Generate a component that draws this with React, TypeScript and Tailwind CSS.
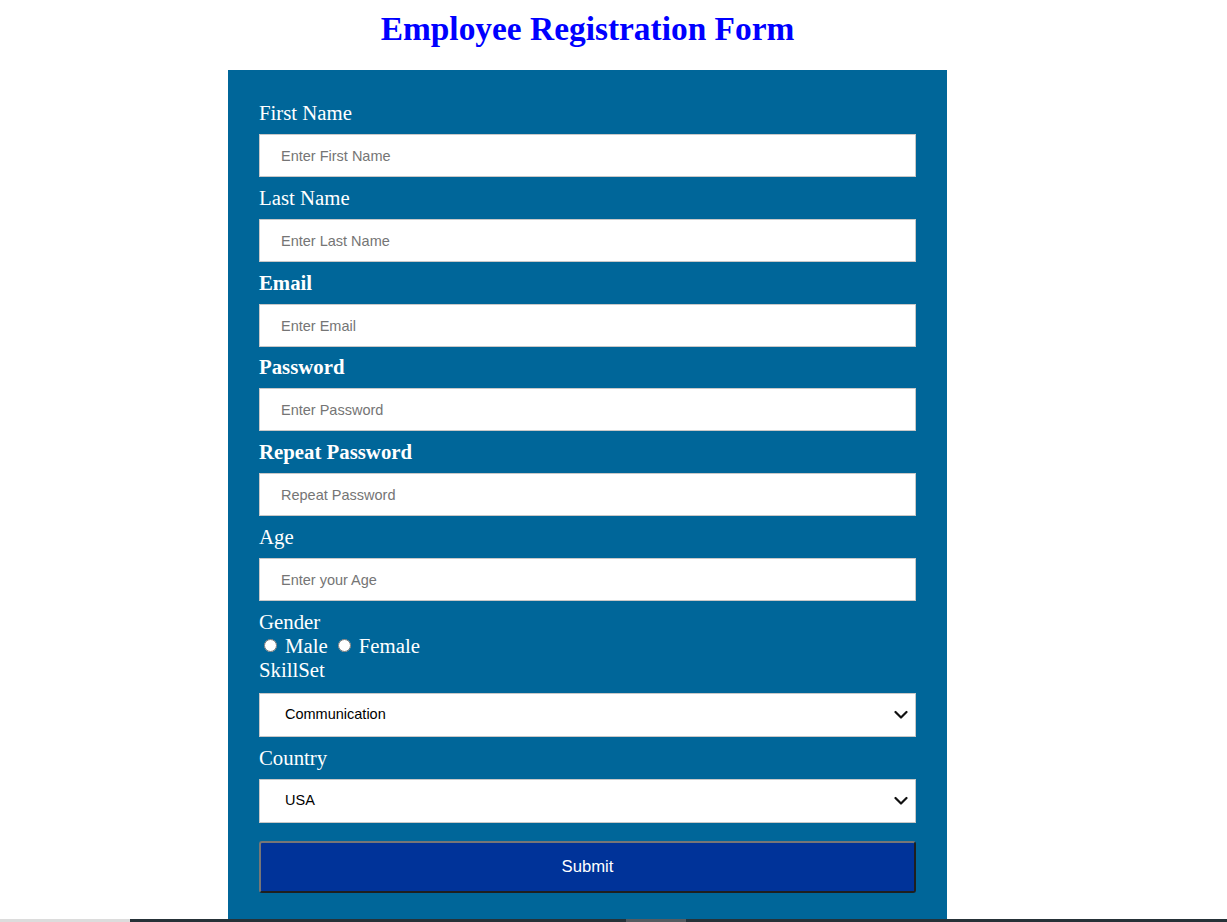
import React, { useState } from "react";

interface Field {
  name: string;
  label: string;
  placeholder: string;
  type: string;
  bold?: boolean;
  gap?: string;
}

const fields: Field[] = [
  { name: "firstName", label: "First Name", placeholder: "Enter First Name", type: "text" },
  { name: "lastName", label: "Last Name", placeholder: "Enter Last Name", type: "text" },
  { name: "email", label: "Email", placeholder: "Enter Email", type: "email", bold: true, gap: "mb-[8px]" },
  { name: "password", label: "Password", placeholder: "Enter Password", type: "password", bold: true },
  { name: "repeat", label: "Repeat Password", placeholder: "Repeat Password", type: "password", bold: true },
  { name: "age", label: "Age", placeholder: "Enter your Age", type: "text" },
];

const Chevron = () => (
  <svg
    className="pointer-events-none absolute right-[8px] top-1/2 -translate-y-1/2"
    width="14"
    height="9"
    viewBox="0 0 14 9"
    fill="none"
  >
    <path d="M1.5 1.5 L7 7 L12.5 1.5" stroke="#111" strokeWidth="2.2" strokeLinecap="round" strokeLinejoin="round" />
  </svg>
);

const App = () => {
  const [gender, setGender] = useState("");
  const [skill, setSkill] = useState("Communication");
  const [country, setCountry] = useState("USA");

  return (
    <div className="min-h-[922px] bg-white">
      <div className="w-[1175px] flex flex-col items-center">
        <h1 className="pt-[10px] mb-[23px] text-[33.4px] leading-[37px] font-bold text-[#0000ff] font-['Liberation_Serif',serif]">
          Employee Registration Form
        </h1>

        <form
          onSubmit={(e) => e.preventDefault()}
          className="w-[719px] bg-[#006699] pt-[31px] pb-[26px] px-[31px] flex flex-col font-['Liberation_Serif',serif] text-white"
        >
          {fields.map((f) => (
            <div key={f.name} className={`flex flex-col ${f.gap ?? "mb-[9px]"}`}>
              <label className={`text-[20.8px] leading-[23px] ${f.bold ? "font-bold" : ""}`}>{f.label}</label>
              <input
                type={f.type}
                name={f.name}
                placeholder={f.placeholder}
                className="mt-[10px] h-[43px] w-full bg-white border border-[#c8c8c8] pl-[21px] text-[14.5px] text-black placeholder:text-[#757575] font-['Liberation_Sans',Arial,sans-serif] outline-none"
              />
            </div>
          ))}

          <label className="text-[20.8px] leading-[23px]">Gender</label>
          <div className="flex items-center h-[25px] text-[20.8px] leading-[23px]">
            <input
              type="radio"
              name="gender"
              checked={gender === "male"}
              onChange={() => setGender("male")}
              className="m-0 ml-[5px] mr-[8px] w-[13px] h-[13px]"
            />
            <span>Male</span>
            <input
              type="radio"
              name="gender"
              checked={gender === "female"}
              onChange={() => setGender("female")}
              className="m-0 ml-[10px] mr-[8px] w-[13px] h-[13px]"
            />
            <span>Female</span>
          </div>

          <label className="text-[20.8px] leading-[23px]">SkillSet</label>
          <div className="relative mt-[12px] mb-[9px]">
            <select
              value={skill}
              onChange={(e) => setSkill(e.target.value)}
              className="appearance-none h-[44px] w-full bg-white border border-[#c8c8c8] pl-[25px] text-[14.5px] text-black font-['Liberation_Sans',Arial,sans-serif] outline-none"
            >
              <option>Communication</option>
              <option>Leadership</option>
              <option>Programming</option>
              <option>Design</option>
            </select>
            <Chevron />
          </div>

          <label className="text-[20.8px] leading-[23px]">Country</label>
          <div className="relative mt-[10px]">
            <select
              value={country}
              onChange={(e) => setCountry(e.target.value)}
              className="appearance-none h-[44px] w-full bg-white border border-[#c8c8c8] pl-[25px] text-[14.5px] text-black font-['Liberation_Sans',Arial,sans-serif] outline-none"
            >
              <option>USA</option>
              <option>UK</option>
              <option>Canada</option>
              <option>India</option>
            </select>
            <Chevron />
          </div>

          <button
            type="submit"
            className="mt-[18px] h-[52px] w-full bg-[#003399] rounded-[3px] border-2 border-t-[#767676] border-l-[#767676] border-b-[#1f1f1f] border-r-[#1f1f1f] text-white text-[16.7px] font-['Liberation_Sans',Arial,sans-serif]"
          >
            Submit
          </button>
        </form>
      </div>

      {/* bottom strip */}
      <div className="flex h-[3px]">
        <div className="w-[130px] bg-[#dcdcdc]" />
        <div className="w-[496px] bg-[#263238]" />
        <div className="w-[60px] bg-[#555b60]" />
        <div className="flex-1 bg-[#263238]" />
      </div>
    </div>
  );
};

export default App;
